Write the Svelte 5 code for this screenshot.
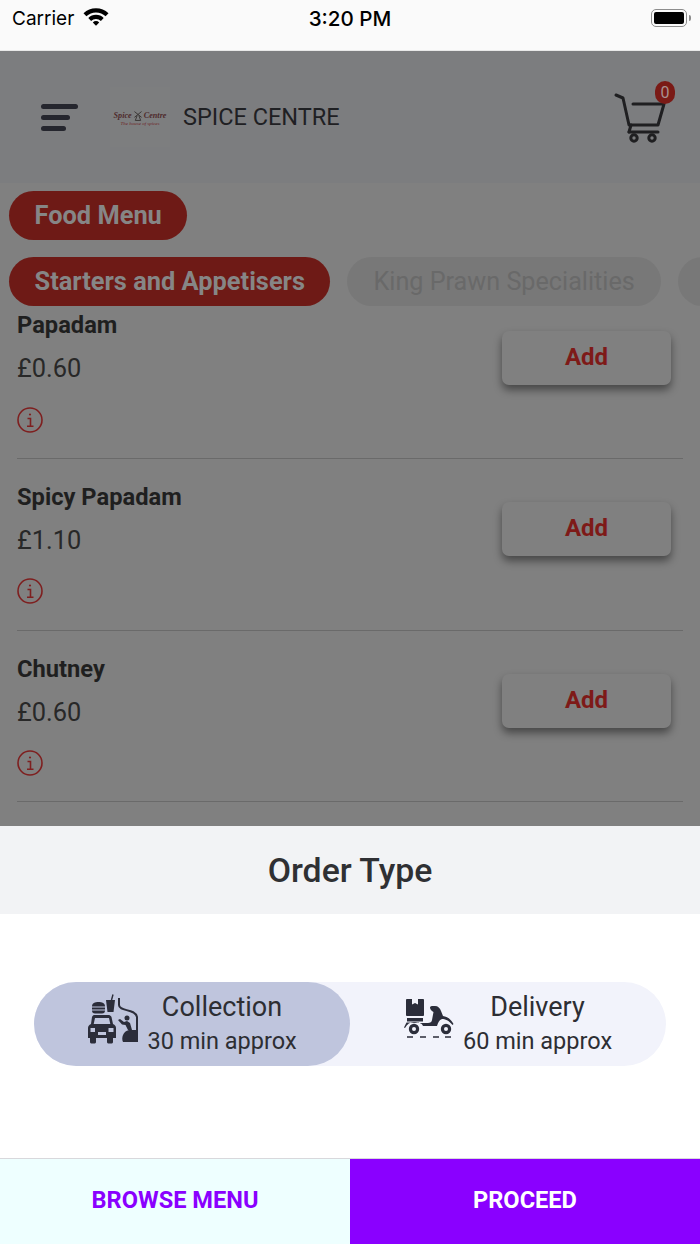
<script>
  const dishes = [
    { name: 'Papadam', price: '£0.60' },
    { name: 'Spicy Papadam', price: '£1.10' },
    { name: 'Chutney', price: '£0.60' }
  ];
  // the third tab runs off the right edge, only its rounded start shows
  const tabs = ['Starters and Appetisers', 'King Prawn Specialities', ''];
  let orderType = $state('collection');
</script>

<div class="screen">
  <div class="status">
    <div class="status-left">
      <span>Carrier</span>
      <svg width="26" height="19" viewBox="0 0 26 19">
        <path d="M0.5 6.2 A18 18 0 0 1 25.5 6.2 L22.6 9.3 A13.8 13.8 0 0 0 3.4 9.3Z" fill="#000"/>
        <path d="M5.3 11 A10.8 10.8 0 0 1 20.7 11 L17.9 14 A6.8 6.8 0 0 0 8.1 14Z" fill="#000"/>
        <path d="M9.8 15.4 A4.6 4.6 0 0 1 16.2 15.4 L13 18.8Z" fill="#000"/>
      </svg>
    </div>
    <span class="clock">3:20 PM</span>
    <div class="battery">
      <div class="battery-body"><div class="battery-fill"></div></div>
      <div class="battery-cap"></div>
    </div>
  </div>

  <header class="topbar">
    <div class="burger"><i class="l1"></i><i class="l2"></i><i class="l3"></i></div>
    <div class="logo">
      <span class="logo-name">Spice
        <svg width="8" height="10" viewBox="0 0 9 11" fill="none" stroke="#35302f" stroke-width="1">
          <path d="M0.5 0.5 L8.5 7 M8.5 0.5 L0.5 7 M3.5 5 L1.5 10.5 H7.5 L5.5 5"/>
        </svg>
        Centre</span>
      <span class="logo-tag">The house of spices</span>
    </div>
    <span class="brand">SPICE CENTRE</span>
    <div class="cart">
      <svg width="52" height="50" viewBox="0 0 52 50" fill="none" stroke="#1f1f21" stroke-width="3" stroke-linecap="round" stroke-linejoin="round">
        <path d="M2 2 L9 5 L15 32 H44 L50 11 H19"/>
        <path d="M15 39 H44"/>
        <path d="M17 32 L15 39"/>
        <circle cx="20" cy="45" r="3.2"/>
        <circle cx="38" cy="45" r="3.2"/>
      </svg>
      <span class="badge">0</span>
    </div>
  </header>

  <main class="menu">
    <div class="pill-row first"><span class="pill on">Food Menu</span></div>
    <div class="pill-row tabs">
      {#each tabs as t, i}
        <span class="pill" class:on={i === 0} class:stub={!t}>{t}</span>
      {/each}
    </div>
    <div class="dishes">
      {#each dishes as d}
        <div class="dish">
          <div class="dish-info">
            <div class="dish-name">{d.name}</div>
            <div class="dish-price">{d.price}</div>
            <svg class="info" width="26" height="26" viewBox="0 0 26 26" fill="none" stroke="#7e1f1f">
              <circle cx="13" cy="13" r="12" stroke-width="1.6"/>
              <path d="M10.5 11.5 H13.5 V19 M10 19.2 H16.5" stroke-width="1.6"/>
              <circle cx="13" cy="7.5" r="1.1" fill="#7e1f1f" stroke="none"/>
            </svg>
          </div>
          <button class="add">Add</button>
        </div>
      {/each}
    </div>
  </main>

  <section class="sheet">
    <h2>Order Type</h2>
    <div class="sheet-body">
      <div class="toggle">
        <button class="opt" class:picked={orderType === 'collection'} onclick={() => (orderType = 'collection')}>
          <svg class="opt-icon" width="54" height="50" viewBox="0 0 54 50" fill="#2b2d3a">
            <!-- burger -->
            <path d="M5 12.5 C5 9 8 8 11.5 8 C15 8 18 9 18 12.5Z"/>
            <path d="M5 13.5 H18 V15.5 H5Z"/>
            <path d="M5 16.5 H18 C18 18.5 17 19.5 15 19.5 H8 C6 19.5 5 18.5 5 16.5Z"/>
            <!-- cup -->
            <path d="M19 6 H28 L26.5 18 H20.5Z"/>
            <path d="M24.5 6 L26 0.5" fill="none" stroke="#2b2d3a" stroke-width="1.4"/>
            <!-- hatch -->
            <path d="M32 4 V11 C32 18 48 14 50 23 V48" fill="none" stroke="#2b2d3a" stroke-width="2"/>
            <!-- car -->
            <path fill-rule="evenodd" d="M7 21 H22 C23 21 24 22 24.5 23 L26 30 C28 31 29 32 29 34 V44 H26 V48 C26 49 25 49.5 24 49.5 H22 C21 49.5 20 49 20 48 V44 H9 V48 C9 49 8 49.5 7 49.5 H5 C4 49.5 3 49 3 48 V44 H1 V34 C1 32 2 31 4 30 L5 23 C5.5 22 6 21 7 21Z M8 24 L6.7 30 H23.3 L22 24Z M3.5 34 V38 H8 V34Z M21.5 34 V38 H26.5 V34Z M11 38 V41 H19 V38Z"/>
            <!-- person in the hatch -->
            <circle cx="40" cy="24" r="2.5"/>
            <path d="M31 26 L33 25 L37 28 L40 27 L43 29 L45 36 L41 36 L38.5 31 L35 30.5Z"/>
            <path d="M36 48 C34 44 36 37 42 36 H51 V48Z"/>
          </svg>
          <span class="opt-text"><span class="opt-title">Collection</span><span class="opt-sub">30 min approx</span></span>
        </button>
        <button class="opt" class:picked={orderType === 'delivery'} onclick={() => (orderType = 'delivery')}>
          <svg class="opt-icon scooter" width="50" height="42" viewBox="0 0 50 42" fill="#2b2d3a">
            <!-- parcel -->
            <path d="M3 1 H19 C19.5 1 20 1.5 20 2 V17 C20 17.5 19.5 18 19 18 H3 C2.5 18 2 17.5 2 17 V2 C2 1.5 2.5 1 3 1Z"/>
            <path d="M8 1 H14 V6.5 L11 5 L8 6.5Z" fill="#f2f3fb"/>
            <path d="M3 20 H19 V23.5 H3Z"/>
            <!-- scooter -->
            <path d="M26 9.5 C26 8.5 27 8 29 8 H31 C34 8 36 10 37 13 L39 18 C43 18.5 47 21 49.5 26 L48.5 27 C45 22.5 41 21 38 21 C35 22 34 25 33 28 H19 C18 25 14 24 10 24 C6 24 3 26 1 30 L0 29.5 L2.5 24.5 L24 25 C26 25 28 24 28 22 L29.5 14 C28 13 26 11.5 26 9.5Z"/>
            <circle cx="10" cy="31" r="5.2"/>
            <circle cx="10" cy="31" r="2" fill="#f2f3fb"/>
            <circle cx="42" cy="31" r="5.2"/>
            <circle cx="42" cy="31" r="2" fill="#f2f3fb"/>
            <path d="M3 38.2 H9 V39.8 H3Z M16 38.2 H22 V39.8 H16Z M29 38.2 H35 V39.8 H29Z M41 38.2 H47 V39.8 H41Z"/>
          </svg>
          <span class="opt-text"><span class="opt-title">Delivery</span><span class="opt-sub">60 min approx</span></span>
        </button>
      </div>
    </div>
    <footer class="actions">
      <button class="browse">BROWSE MENU</button>
      <button class="proceed">PROCEED</button>
    </footer>
  </section>
</div>

<style>
  :global(body) {
    margin: 0;
    background: #808080;
  }

  .screen {
    display: flex;
    flex-direction: column;
    width: 700px;
    height: 1244px;
    overflow: hidden;
    font-family: Roboto, sans-serif;
    background: #808080;
  }

  .status {
    display: grid;
    grid-template-columns: 1fr auto 1fr;
    align-items: center;
    height: 36px;
    padding: 0 9px 14px 12px;
    flex: none;
    background: #fafafa;
    border-bottom: 1px solid #e8e8e8;
    color: #000;
    font-family: Inter, sans-serif;
  }

  .status-left {
    display: flex;
    align-items: center;
    gap: 9px;
  }

  .status-left span {
    font-size: 19px;
  }

  .status-left svg {
    margin-top: -4px;
  }

  .clock {
    margin-left: -3px;
    font-weight: 500;
    font-size: 20.6px;
  }

  .battery {
    display: flex;
    align-items: center;
    justify-content: flex-end;
    gap: 2px;
  }

  .battery-body {
    box-sizing: border-box;
    width: 36px;
    height: 18px;
    padding: 2px;
    border: 1.5px solid #8d8d8d;
    border-radius: 5px;
  }

  .battery-fill {
    height: 100%;
    background: #000;
    border-radius: 2px;
  }

  .battery-cap {
    width: 2px;
    height: 6px;
    background: #8d8d8d;
    border-radius: 0 2px 2px 0;
  }

  .topbar {
    display: flex;
    align-items: center;
    height: 132px;
    flex: none;
    padding: 0 31px 0 41px;
    background: #7c7d7f;
    box-sizing: border-box;
  }

  .burger {
    display: flex;
    flex-direction: column;
    gap: 6px;
    width: 37px;
    margin-right: 32px;
  }

  .burger i {
    display: block;
    height: 5px;
    border-radius: 3px;
    background: #25262e;
  }

  .burger .l1 { width: 37px; }
  .burger .l2 { width: 29px; }
  .burger .l3 { width: 25px; }

  .logo {
    display: flex;
    flex-direction: column;
    align-items: center;
    justify-content: center;
    width: 60px;
    height: 60px;
    margin-right: 13px;
    padding-top: 3px;
    box-sizing: border-box;
    background: #7d7e7f;
    color: #4e2a2c;
    font-family: "Liberation Serif", serif;
    font-style: italic;
  }

  .logo-name {
    display: flex;
    align-items: center;
    gap: 2px;
    font-size: 8.2px;
    line-height: 11px;
    font-weight: bold;
    white-space: nowrap;
  }

  .logo-tag {
    font-size: 5px;
    line-height: 6px;
    color: #6e2426;
    white-space: nowrap;
  }

  .brand {
    flex: 1;
    font-size: 23.5px;
    color: #1f2023;
  }

  .cart {
    position: relative;
    width: 55px;
    height: 50px;
    margin-top: 2px;
  }

  .badge {
    position: absolute;
    top: -12px;
    right: -6px;
    width: 20px;
    height: 23px;
    border-radius: 10px;
    background: #7a1a16;
    color: #a89090;
    font-size: 16px;
    line-height: 23px;
    text-align: center;
  }

  .menu {
    flex: 1;
    min-height: 0;
    overflow: hidden;
    display: flex;
    flex-direction: column;
  }

  .pill-row {
    display: flex;
    flex: none;
    gap: 17px;
    padding: 8px 0 0 9px;
    white-space: nowrap;
  }

  .pill-row.first {
    padding-bottom: 9px;
  }

  .pill-row.tabs {
    overflow: hidden;
    position: relative;
    z-index: 1;
  }

  .pill {
    flex: none;
    height: 49px;
    padding: 0 26px;
    border-radius: 25px;
    background: #787878;
    color: #696969;
    font-size: 25.2px;
    line-height: 49px;
  }

  .pill.on {
    padding: 0 25.5px;
    background: #6e1a16;
    color: #868686;
    font-size: 25.4px;
    font-weight: 700;
  }

  .pill.stub {
    width: 60px;
  }

  .dishes {
    margin-top: -18.4px;
    padding: 0 17px;
  }

  .dish {
    display: flex;
    justify-content: space-between;
    height: 171.6px;
    box-sizing: border-box;
    border-bottom: 1px solid #6a6a6a;
  }

  .dish-info {
    display: flex;
    flex-direction: column;
    align-items: flex-start;
    padding-top: 22.8px;
  }

  .dish-name {
    font-size: 23.7px;
    font-weight: 700;
    line-height: 30px;
    color: #1f1f1f;
  }

  .dish-price {
    margin-top: 13px;
    font-size: 25.4px;
    line-height: 30px;
    color: #282828;
  }

  .info {
    margin-top: 23.2px;
  }

  .add {
    width: 169px;
    height: 54px;
    margin: 43.2px 12px 0 0;
    padding: 0 0 2px;
    border: none;
    border-radius: 7px;
    background: #808080;
    box-shadow: 0 5px 9px rgba(0, 0, 0, 0.45);
    color: #7e1a18;
    font-family: inherit;
    font-size: 24px;
    font-weight: 700;
  }

  .sheet {
    display: flex;
    flex-direction: column;
    height: 418px;
    flex: none;
    background: #fff;
  }

  .sheet h2 {
    margin: 0;
    height: 88px;
    flex: none;
    background: #f2f3f5;
    color: #2f3033;
    font-size: 33.8px;
    font-weight: 500;
    line-height: 90px;
    text-align: center;
  }

  .sheet-body {
    flex: 1;
    padding: 68px 34px 0;
  }

  .toggle {
    display: flex;
    height: 84px;
    border-radius: 42px;
    background: #f2f3fb;
  }

  .opt {
    flex: 1;
    display: flex;
    align-items: center;
    justify-content: center;
    gap: 6px;
    border: none;
    border-radius: 42px;
    background: transparent;
    font-family: inherit;
    color: #2d2e33;
    padding: 0;
  }

  .opt.picked {
    background: #bfc5dd;
  }

  .opt-icon {
    margin-bottom: 10px;
  }

  .scooter {
    margin-right: 3px;
  }

  .opt-text {
    display: flex;
    flex-direction: column;
    align-items: center;
  }

  .opt-title {
    font-size: 27px;
    line-height: 34px;
    font-weight: 400;
  }

  .opt-sub {
    font-size: 23.5px;
    line-height: 34px;
    font-weight: 400;
  }

  .actions {
    display: flex;
    height: 85px;
    flex: none;
    border-top: 1px solid #d8d8dc;
  }

  .actions button {
    flex: 1;
    border: none;
    font-family: inherit;
    font-size: 23.6px;
    font-weight: 700;
    padding: 0 0 3px;
  }

  .browse {
    background: #eeffff;
    color: #8a00ff;
  }

  .proceed {
    background: #8a00ff;
    color: #fff;
  }
</style>
